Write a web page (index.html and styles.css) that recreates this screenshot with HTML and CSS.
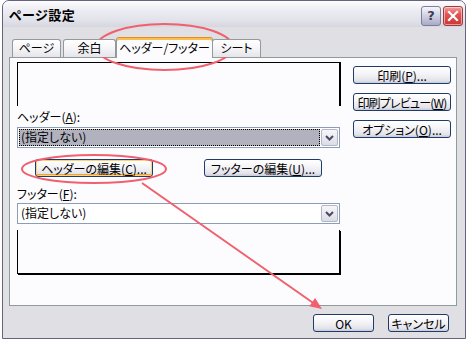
FILE: index.html
```html
<!DOCTYPE html>
<html lang="ja">
<head>
  <meta charset="UTF-8" />
  <title>ページ設定</title>
  <link rel="stylesheet" href="styles.css">
</head>
<body>
  <div class="window">
    <div class="titlebar">
      <span class="title">ページ設定</span>
      <div class="caption-buttons">
        <span class="cap-btn help">?</span>
        <span class="cap-btn close">
          <svg width="12" height="12" viewBox="0 0 12 12"><path d="M2 2 L10 10 M10 2 L2 10" stroke="#fff" stroke-width="2.2" stroke-linecap="square"/></svg>
        </span>
      </div>
    </div>

    <div class="client">
      <div class="tabs">
        <div class="tab t1">ページ</div>
        <div class="tab t2">余白</div>
        <div class="tab t3 active">ヘッダー/フッター</div>
        <div class="tab t4">シート</div>
      </div>

      <div class="panel">
        <div class="panel-main">
          <div class="page-edge top"></div>
          <div class="field-label">ヘッダー(<u>A</u>):</div>
          <div class="combo">
            <span class="combo-value selected">(指定しない)</span>
            <span class="combo-arrow">
              <svg width="9" height="6" viewBox="0 0 9 6"><path d="M1 1 L4.5 4.5 L8 1" fill="none" stroke="#4a4a64" stroke-width="2"/></svg>
            </span>
          </div>
          <div class="edit-row">
            <button class="btn hot">ヘッダーの編集(<u>C</u>)...</button>
            <button class="btn">フッターの編集(<u>U</u>)...</button>
          </div>
          <div class="field-label lower">フッター(<u>F</u>):</div>
          <div class="combo">
            <span class="combo-value">(指定しない)</span>
            <span class="combo-arrow">
              <svg width="9" height="6" viewBox="0 0 9 6"><path d="M1 1 L4.5 4.5 L8 1" fill="none" stroke="#4a4a64" stroke-width="2"/></svg>
            </span>
          </div>
          <div class="page-edge bottom"></div>
        </div>

        <div class="panel-side">
          <button class="btn">印刷(<u>P</u>)...</button>
          <button class="btn tight">印刷プレビュー(<u>W</u>)</button>
          <button class="btn">オプション(<u>O</u>)...</button>
        </div>
      </div>

      <div class="dialog-buttons">
        <button class="btn wide">OK</button>
        <button class="btn wide">キャンセル</button>
      </div>
    </div>
  </div>

  <svg class="annotations" width="468" height="342" viewBox="0 0 468 342">
    <ellipse cx="164.5" cy="47" rx="68" ry="23" fill="none" stroke="#f0606e" stroke-width="2"/>
    <ellipse cx="94" cy="169" rx="72" ry="14" fill="none" stroke="#f0606e" stroke-width="2"/>
    <line x1="142" y1="183" x2="314" y2="303.5" stroke="#f0606e" stroke-width="2"/>
    <polygon points="322,309 309.3,306.2 315.1,298" fill="#f0606e"/>
  </svg>
</body>
</html>
```

FILE: styles.css
```css
* {
  box-sizing: border-box;
}
body {
  margin: 0;
  width: 468px;
  height: 342px;
  position: relative;
  overflow: hidden;
  background: #fff;
  color: #000;
  font-family: "Noto Sans CJK JP", "DejaVu Sans", sans-serif;
  font-size: 12px;
  font-feature-settings: "palt";
}
.window {
  margin-left: 2px;
  width: 464px;
  height: 339px;
  border: 1px solid #63637f;
  border-radius: 7px 7px 0 0;
  background: #e0dfe3;
  display: flex;
  flex-direction: column;
  overflow: hidden;
}
.titlebar {
  height: 26px;
  flex: none;
  display: flex;
  align-items: center;
  justify-content: space-between;
  padding: 0 2px 0 6px;
  background: linear-gradient(#fdfdfe, #ececf2 35%, #e2e2ea 75%, #d6d6e0);
}
.title {
  font-weight: bold;
  font-size: 13px;
  letter-spacing: 0.5px;
}
.caption-buttons {
  display: flex;
  gap: 2px;
  margin-top: 3px;
}
.cap-btn {
  width: 20px;
  height: 20px;
  border-radius: 3px;
  display: flex;
  align-items: center;
  justify-content: center;
}
.help {
  border: 1px solid #7d7d9c;
  background: linear-gradient(#f6f6fb, #cfd0e0 50%, #a9abc4);
  color: #3b3b5a;
  font-family: "DejaVu Sans", sans-serif;
  font-weight: bold;
  font-size: 13px;
}
.close {
  border: 1px solid #9e3a3a;
  background: linear-gradient(#f4a0a0, #e25454 40%, #cc3535);
  box-shadow: inset 0 0 0 1px rgba(255, 255, 255, 0.5);
}
.client {
  flex: 1;
  padding: 10px 8px 0 6px;
}
.tabs {
  height: 20px;
  display: flex;
  align-items: flex-end;
  padding-left: 3px;
  position: relative;
  z-index: 1;
}
.tab {
  height: 18px;
  border: 1px solid #919b9c;
  border-bottom: none;
  border-radius: 3px 3px 0 0;
  background: linear-gradient(#ffffff, #f4f4f7 55%, #e4e4ea);
  text-align: center;
  line-height: 16px;
  white-space: nowrap;
}
.t1 {
  width: 49px;
  margin-right: 2px;
}
.t2 {
  width: 53px;
}
.t3 {
  width: 97px;
}
.t4 {
  width: 49px;
  margin-left: -1px;
}
.tab.active {
  height: 21px;
  margin-bottom: -1px;
  background: #fcfcfe;
  border-top: 1px solid #e68b2c;
  box-shadow: inset 0 2px 0 #fbc04a;
  line-height: 19px;
  position: relative;
  z-index: 2;
}
.panel {
  height: 249px;
  border: 1px solid #919b9c;
  background: #fcfcfe;
  display: flex;
  padding: 4px 0 0 7px;
}
.panel-main {
  width: 323px;
  display: flex;
  flex-direction: column;
}
.page-edge {
  height: 44px;
  border: 1px solid #000;
}
.page-edge.top {
  border-bottom: none;
  box-shadow: 1px 0 0 #000;
}
.page-edge.bottom {
  height: 44px;
  margin-top: 6px;
  border-top: none;
  box-shadow: 1px 1px 0 #000;
}
.field-label {
  height: 21px;
  line-height: 21px;
}
.field-label.lower {
  height: 18px;
  line-height: 18px;
  margin-top: 8px;
}
.combo {
  height: 21px;
  border: 1px solid #8c9db6;
  background: #fff;
  display: flex;
  padding: 1px;
}
.combo-value {
  flex: 1;
  height: 17px;
  line-height: 16px;
  padding-left: 2px;
  margin-right: 1px;
}
.combo-value.selected {
  background: #b1b2be;
  outline: 1px dotted #000;
  outline-offset: -1px;
}
.combo-arrow {
  width: 17px;
  height: 17px;
  border: 1px solid #b3b5c8;
  border-radius: 2px;
  background: linear-gradient(#f6f6fa, #dcdce6);
  display: flex;
  align-items: center;
  justify-content: center;
}
.edit-row {
  display: flex;
  justify-content: space-between;
  padding: 0 18px;
  margin-top: 11px;
}
.btn {
  height: 18px;
  padding: 0;
  border: 1px solid #1f3c68;
  border-radius: 3px;
  background: linear-gradient(#ffffff, #f4f4f7 45%, #e2e2ea 85%, #c8c9d8);
  font-family: inherit;
  font-size: 12px;
  font-feature-settings: "palt";
  color: #000;
  line-height: 15px;
  text-align: center;
  white-space: nowrap;
  overflow: hidden;
}
.btn.tight {
  letter-spacing: -0.8px;
}
.edit-row .btn {
  width: 118px;
}
.btn.hot {
  box-shadow: inset 0 0 0 1px #fbd27a, inset 0 -2px 0 #eea43a;
}
.panel-side {
  margin-left: 13px;
  width: 98px;
  display: flex;
  flex-direction: column;
  gap: 9px;
  padding-top: 4px;
}
.panel-side .btn {
  width: 98px;
}
.dialog-buttons {
  display: flex;
  justify-content: flex-end;
  gap: 14px;
  margin-top: 8px;
  padding-right: 8px;
}
.btn.wide {
  width: 61px;
}
u {
  text-decoration: underline;
  text-underline-offset: 1px;
}
.annotations {
  position: absolute;
  top: 0;
  left: 0;
  pointer-events: none;
}
```
